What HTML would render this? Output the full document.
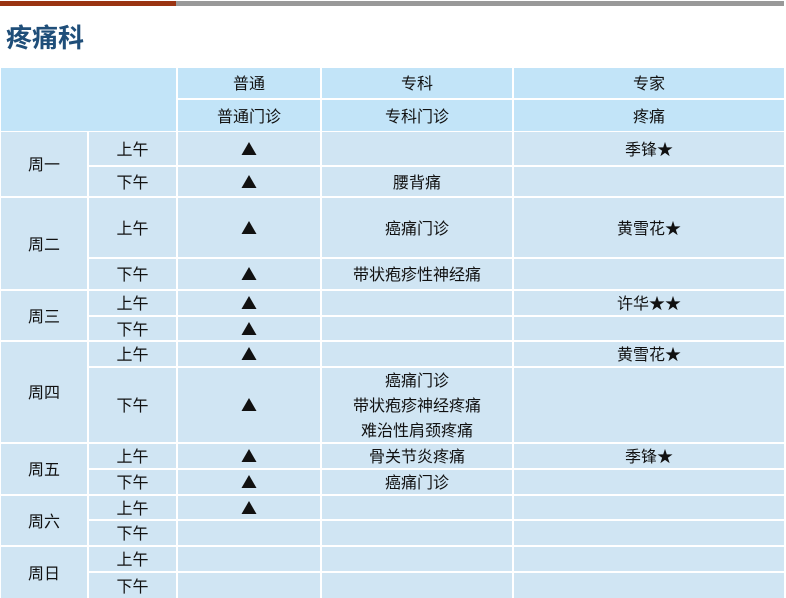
<!DOCTYPE html>
<html><head><meta charset="utf-8"><style>
*{margin:0;padding:0;box-sizing:border-box}
body{width:786px;height:598px;background:#fff;position:relative;overflow:hidden;font-family:"Liberation Sans","Microsoft YaHei","Noto Sans CJK SC",sans-serif;color:#111;font-size:16px}
.bar1{position:absolute;left:0;top:1px;width:176px;height:5px;background:#9a3412}
.bar2{position:absolute;left:176px;top:1px;width:608px;height:5px;background:#999}
h1{position:absolute;left:6px;top:19px;font-size:26px;font-weight:bold;color:#1f4e79;font-family:"Noto Sans CJK SC",sans-serif;line-height:36px}
.c{position:absolute;display:flex;align-items:center;justify-content:center;text-align:center;background:#d0e5f3;line-height:25px;font-family:"Noto Sans CJK SC",sans-serif;padding-bottom:1px}
.h{background:#c2e4f8}
</style></head><body>
<div class="bar1"></div><div class="bar2"></div>
<h1>疼痛科</h1>
<div id="t"></div>
<script>
var X=[0,88,177,321,513,785];
function cell(c0,c1,y0,y1,txt,cls){var d=document.createElement('div');d.className='c '+(cls||'');
d.style.left=(X[c0]+1)+'px';d.style.top=(y0+1)+'px';d.style.width=(X[c1]-X[c0]-2)+'px';d.style.height=(y1-y0-2)+'px';d.innerHTML=txt||'';document.body.appendChild(d);}
cell(0,2,67,132,'','h');
cell(2,3,67,99,'普通','h');cell(3,4,67,99,'专科','h');cell(4,5,67,99,'专家','h');
cell(2,3,99,132,'普通门诊','h');cell(3,4,99,132,'专科门诊','h');cell(4,5,99,132,'疼痛','h');
var days=[
['周一',[[131,166,'上午','▲','','季锋★'],[166,197,'下午','▲','腰背痛','']]],
['周二',[[197,258,'上午','▲','癌痛门诊','黄雪花★'],[258,290,'下午','▲','带状疱疹性神经痛','']]],
['周三',[[290,316,'上午','▲','','许华★★'],[316,341,'下午','▲','','']]],
['周四',[[341,367,'上午','▲','','黄雪花★'],[367,443,'下午','▲','癌痛门诊<br>带状疱疹神经疼痛<br>难治性肩颈疼痛','']]],
['周五',[[443,469,'上午','▲','骨关节炎疼痛','季锋★'],[469,495,'下午','▲','癌痛门诊','']]],
['周六',[[495,520,'上午','▲','',''],[520,546,'下午','','','']]],
['周日',[[546,572,'上午','','',''],[572,599,'下午','','','']]]];
days.forEach(function(d){var r=d[1];cell(0,1,r[0][0],r[r.length-1][1],d[0]);
r.forEach(function(x){cell(1,2,x[0],x[1],x[2]);cell(2,3,x[0],x[1],x[3]);cell(3,4,x[0],x[1],x[4]);cell(4,5,x[0],x[1],x[5]);});});
</script>
</body></html>
